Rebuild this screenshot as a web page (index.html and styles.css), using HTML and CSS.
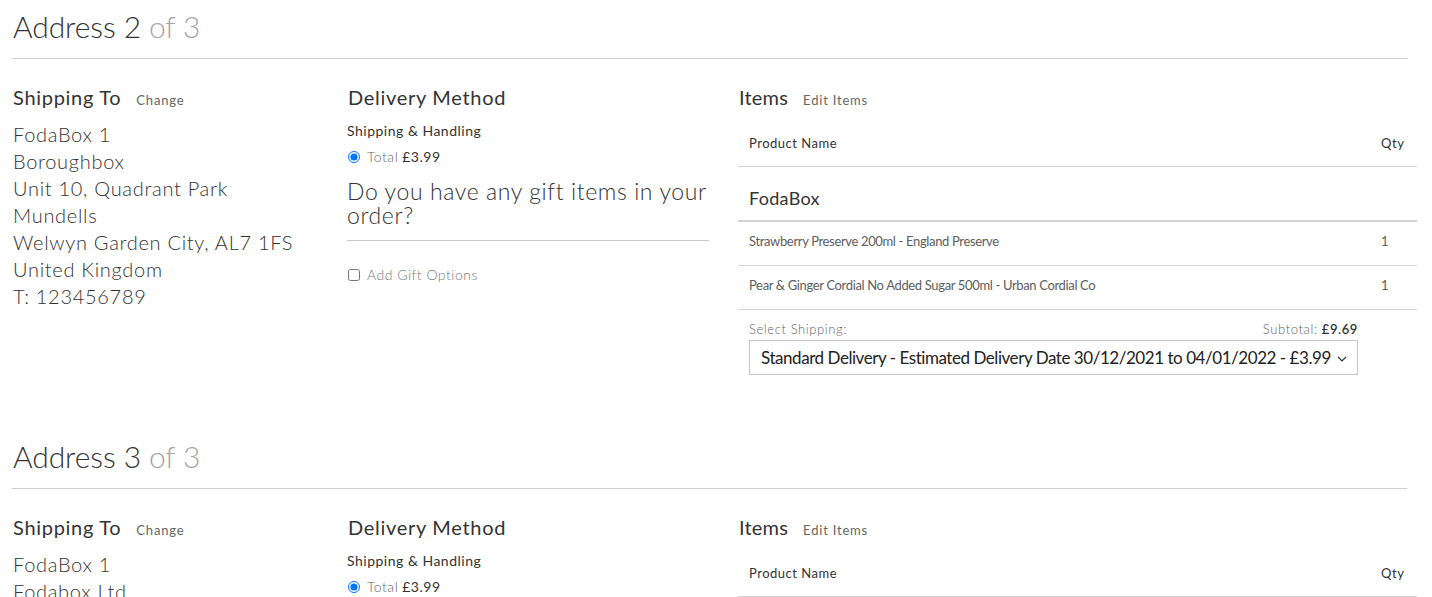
FILE: index.html
```html
<!DOCTYPE html>
<html lang="en">
<head>
<meta charset="utf-8">
<title>Multi-address checkout</title>
<link rel="stylesheet" href="styles.css">
</head>
<body>
<div class="page">

  <section class="address-block">
    <h2 class="address-title">Address 2 <span class="of">of 3</span></h2>
    <div class="columns">
      <div class="col col-ship">
        <div class="col-head"><h3>Shipping To</h3><a class="small-link" href="#">Change</a></div>
        <address class="addr">
          FodaBox 1<br>Boroughbox<br>Unit 10, Quadrant Park<br>Mundells<br>Welwyn Garden City, AL7 1FS<br>United Kingdom<br>T: 123456789
        </address>
      </div>
      <div class="col col-delivery">
        <div class="col-head"><h3>Delivery Method</h3></div>
        <div class="sub-label">Shipping &amp; Handling</div>
        <label class="radio-row"><input type="radio" checked name="m2"><span class="muted">Total</span> <span class="price">£3.99</span></label>
        <p class="gift-question">Do you have any gift items in your order?</p>
        <hr class="rule-short">
        <label class="check-row"><input type="checkbox"><span>Add Gift Options</span></label>
      </div>
      <div class="col col-items">
        <div class="col-head"><h3>Items</h3><a class="small-link" href="#">Edit Items</a></div>
        <div class="items-table">
          <div class="row row-head"><span class="name">Product Name</span><span class="qty">Qty</span></div>
          <div class="row row-vendor"><span class="name">FodaBox</span></div>
          <div class="row row-item"><span class="name">Strawberry Preserve 200ml - England Preserve</span><span class="qty">1</span></div>
          <div class="row row-item"><span class="name">Pear &amp; Ginger Cordial No Added Sugar 500ml - Urban Cordial Co</span><span class="qty">1</span></div>
        </div>
        <div class="ship-select">
          <div class="ship-labels"><span>Select Shipping:</span><span>Subtotal: <b>£9.69</b></span></div>
          <div class="select-box">
            <span>Standard Delivery - Estimated Delivery Date 30/12/2021 to 04/01/2022 - £3.99</span>
            <svg class="chev" width="10" height="6" viewBox="0 0 10 6"><path d="M1 1l4 4 4-4" fill="none" stroke="#333" stroke-width="1.2"/></svg>
          </div>
        </div>
      </div>
    </div>
  </section>

  <section class="address-block">
    <h2 class="address-title">Address 3 <span class="of">of 3</span></h2>
    <div class="columns">
      <div class="col col-ship">
        <div class="col-head"><h3>Shipping To</h3><a class="small-link" href="#">Change</a></div>
        <address class="addr">
          FodaBox 1<br>Fodabox Ltd<br>Unit 10, Quadrant Park<br>Mundells<br>Welwyn Garden City, AL7 1FS<br>United Kingdom<br>T: 123456789
        </address>
      </div>
      <div class="col col-delivery">
        <div class="col-head"><h3>Delivery Method</h3></div>
        <div class="sub-label">Shipping &amp; Handling</div>
        <label class="radio-row"><input type="radio" checked name="m3"><span class="muted">Total</span> <span class="price">£3.99</span></label>
        <p class="gift-question">Do you have any gift items in your order?</p>
        <hr class="rule-short">
        <label class="check-row"><input type="checkbox"><span>Add Gift Options</span></label>
      </div>
      <div class="col col-items">
        <div class="col-head"><h3>Items</h3><a class="small-link" href="#">Edit Items</a></div>
        <div class="items-table">
          <div class="row row-head"><span class="name">Product Name</span><span class="qty">Qty</span></div>
          <div class="row row-vendor"><span class="name">FodaBox</span></div>
        </div>
      </div>
    </div>
  </section>

</div>
</body>
</html>
```
FILE: styles.css
```css
* { box-sizing: border-box; }
html, body { margin: 0; padding: 0; background: #fff; }
body {
  font-family: Lato, "Open Sans", "Liberation Sans", sans-serif;
  color: #333;
  overflow: hidden;
}
.page { padding: 0 0 0 12px; width: 1417px; }

.address-block { padding-bottom: 55px; }
.address-title {
  margin: 8px 0 0 1px;
  font-size: 30px;
  line-height: 36px;
  font-weight: 300;
  color: #333;
  letter-spacing: -0.1px;
}
.address-title .of { color: #a5a5a5; }
.address-block > .address-title + .columns { border-top: 1px solid #cfcfcf; margin-top: 14px; width: 1395px; }

.columns {
  display: grid;
  grid-template-columns: 335px 391px 679px;
  padding-top: 26px;
}
.col-head { display: flex; align-items: baseline; gap: 15px; height: 24px; padding-left: 1px; }
.col-head h3 {
  margin: 0;
  font-size: 20px;
  line-height: 24px;
  font-weight: 400;
  color: #333;
  letter-spacing: 0.7px;
}
.col-items .col-head h3 { letter-spacing: 0.2px; }
.small-link { font-size: 13px; color: #666; text-decoration: none; letter-spacing: 0.8px; }

.addr {
  font-style: normal;
  font-size: 20px;
  line-height: 27px;
  font-weight: 300;
  color: #333;
  margin-top: 12px;
  padding-left: 1px;
  letter-spacing: 0.7px;
}

.sub-label { font-size: 14px; line-height: 18px; margin-top: 13px; color: #333; letter-spacing: 0.5px; }
.radio-row, .check-row { display: flex; align-items: center; font-size: 14px; line-height: 20px; letter-spacing: 0.5px; }
.radio-row { margin-top: 7px; }
.radio-row input, .check-row input { margin: 0 7px 0 1px; width: 12px; height: 12px; }
.muted { color: #666; margin-right: 4px; font-weight: 300; }
.price { color: #333; }
.gift-question {
  margin: 12px 0 0;
  font-size: 23px;
  line-height: 24px;
  font-weight: 300;
  color: #333;
  width: 362px;
  letter-spacing: 0.6px;
}
.rule-short { border: 0; border-top: 1px solid #c8c8c8; margin: 13px 0 0; width: 362px; }
.check-row { margin-top: 24px; color: #777; font-weight: 300; }

.items-table { width: 679px; }
.row { display: flex; justify-content: space-between; padding: 0 12px 0 11px; }
.row .qty { width: 24px; text-align: left; }
.row-head {
  font-size: 13px; line-height: 17px; color: #333;
  padding-top: 26px; padding-bottom: 14px;
  border-bottom: 1px solid #d2d2d2;
  letter-spacing: 0.5px;
}
.row-head .qty { letter-spacing: 0.6px; }
.row-vendor {
  font-size: 18px; line-height: 22px; color: #333;
  padding-top: 20px; padding-bottom: 11px;
  border-bottom: 2px solid #d2d2d2;
  letter-spacing: 0.3px;
}
.row-item {
  font-size: 13px; line-height: 17px; color: #5e5e5e;
  padding-top: 11px; padding-bottom: 15px;
  border-bottom: 1px solid #d6d6d6;
  letter-spacing: -0.35px;
}

.ship-select { width: 609px; margin-left: 11px; margin-top: 11px; }
.ship-labels {
  display: flex; justify-content: space-between;
  font-size: 13px; line-height: 16px; color: #666; font-weight: 300;
  letter-spacing: 0.6px;
}
.ship-labels b { color: #333; font-weight: 600; }
.select-box {
  margin-top: 3px;
  height: 35px;
  border: 1px solid #c8c8c8;
  display: flex; align-items: center; justify-content: space-between;
  padding: 0 10px 0 11px;
  font-size: 17px; color: #222; letter-spacing: -0.45px;
}
.chev { flex: none; margin-top: 2px; }
```
